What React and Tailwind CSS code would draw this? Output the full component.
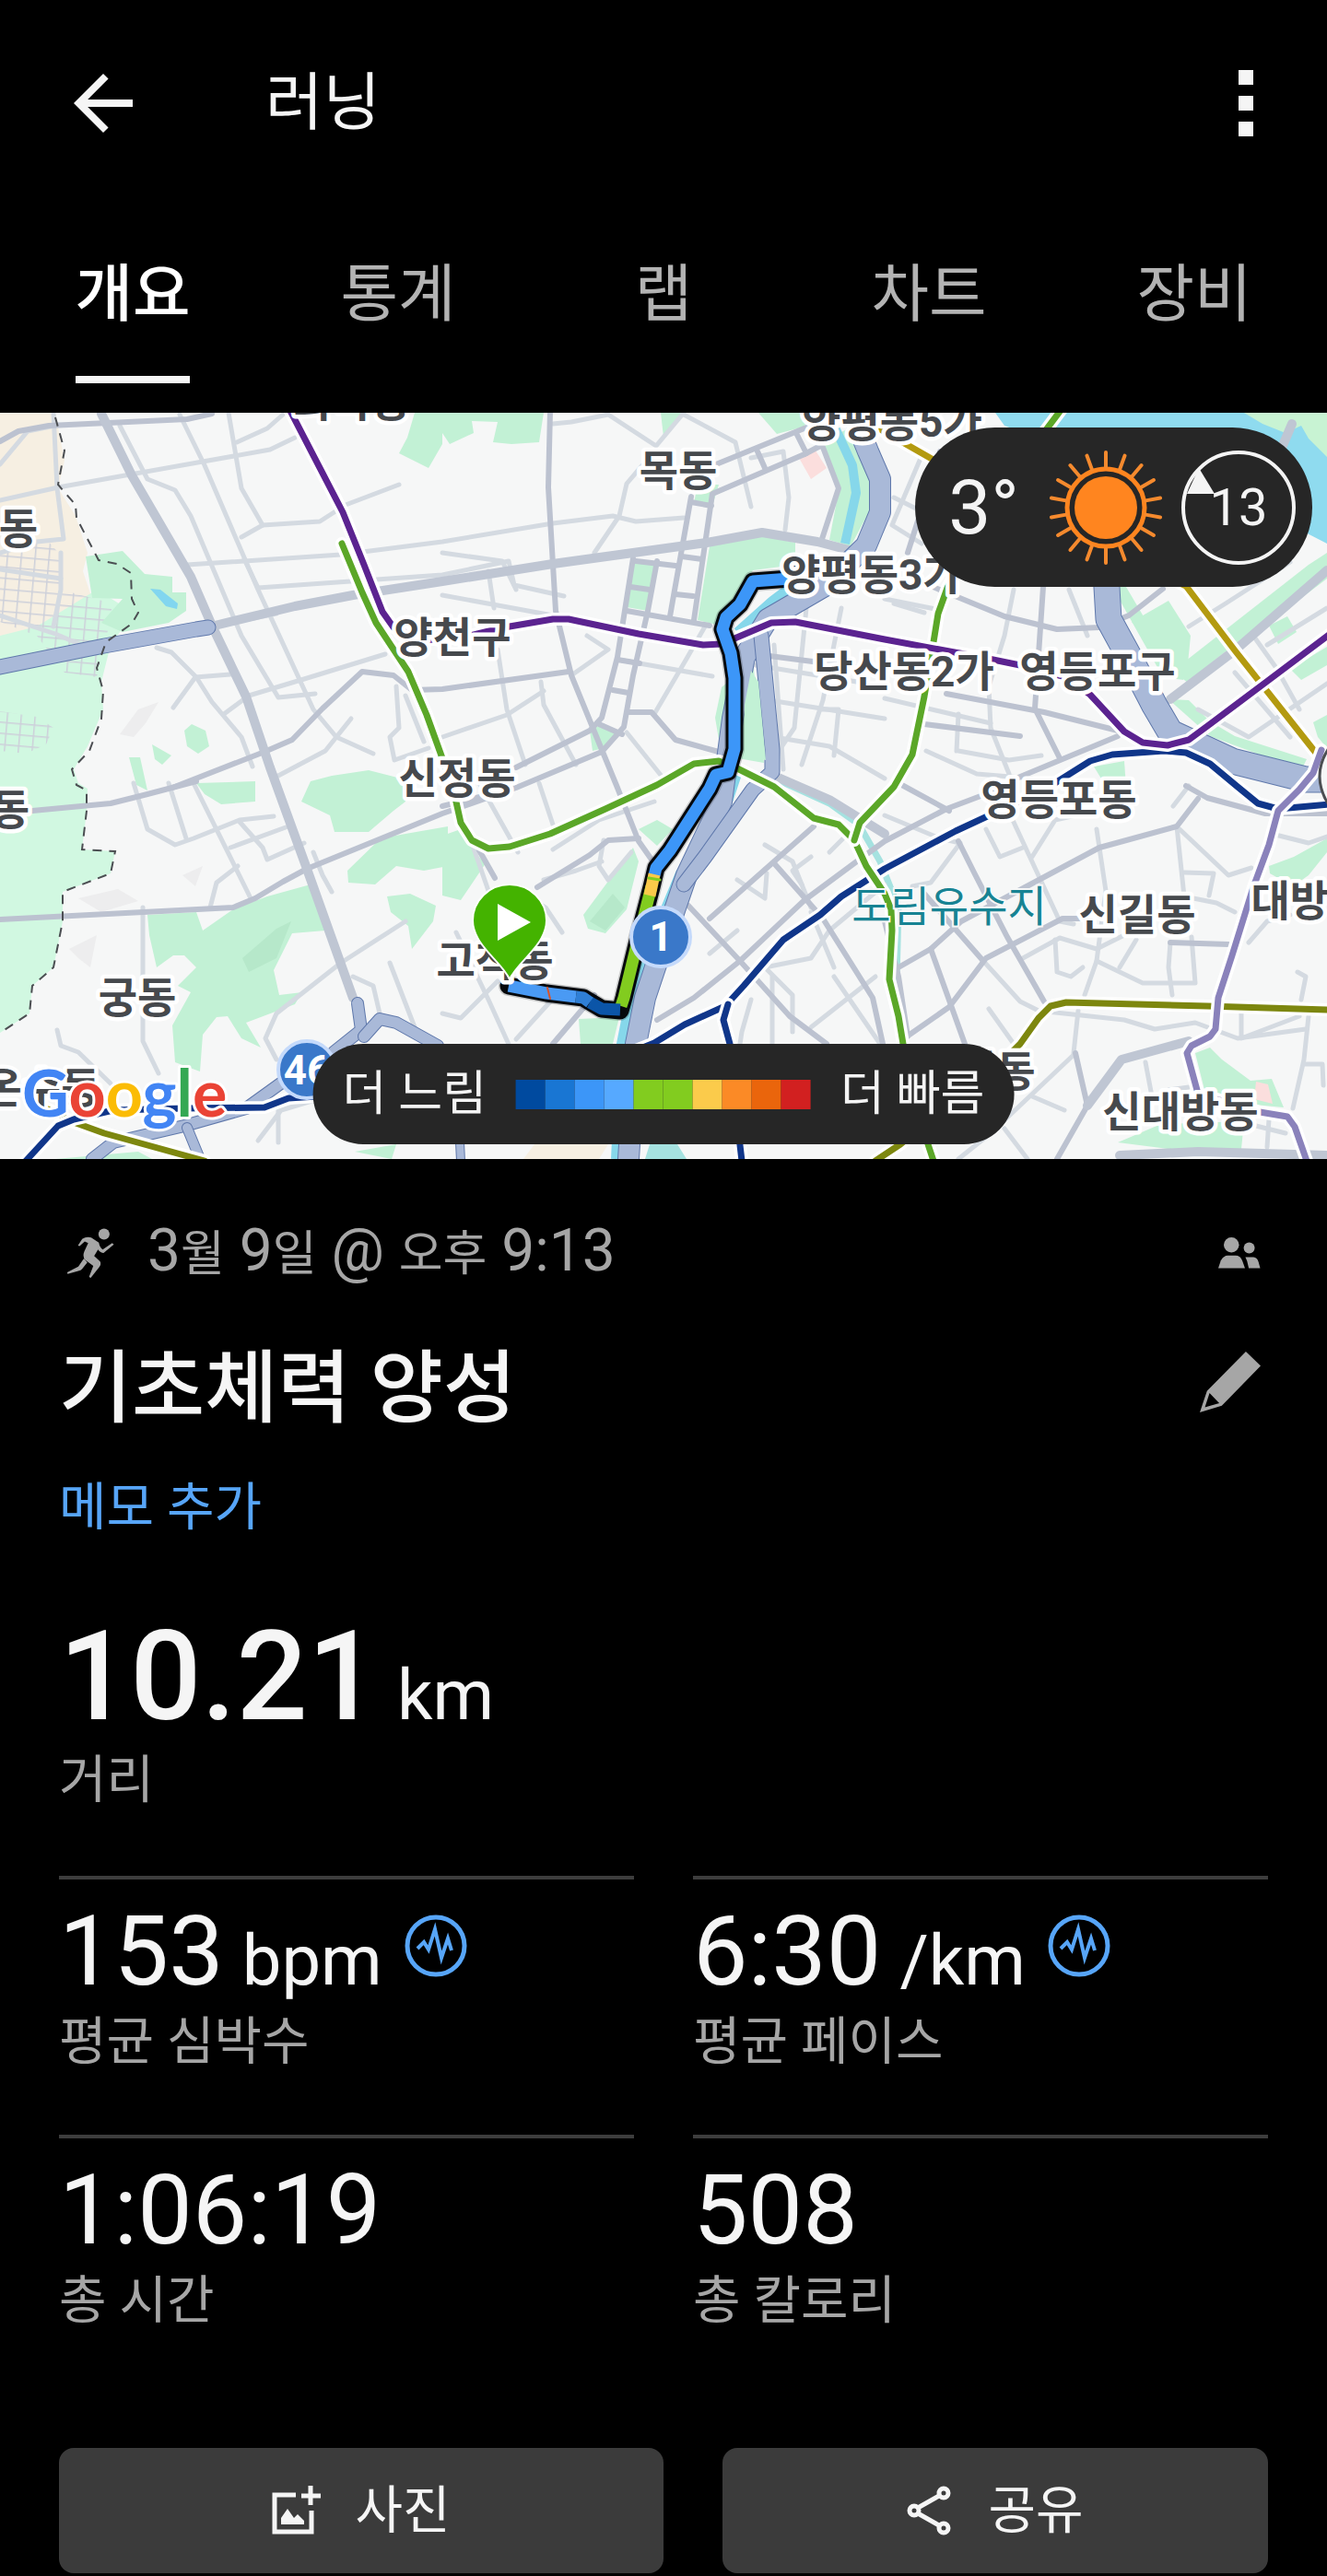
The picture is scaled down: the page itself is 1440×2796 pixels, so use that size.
import { useState } from "react";

const tabs = ["개요", "통계", "랩", "차트", "장비"];

const paceColors = [
  "bg-[#004a9f]",
  "bg-[#1976d3]",
  "bg-[#3c96f8]",
  "bg-[#56a9ff]",
  "bg-[#82cc1f]",
  "bg-[#82cc1f]",
  "bg-[#fbcb4b]",
  "bg-[#fb8a26]",
  "bg-[#ea650c]",
  "bg-[#d22020]",
];

const stats = [
  { value: "153", unit: "bpm", label: "평균 심박수", graph: true },
  { value: "6:30", unit: "/km", label: "평균 페이스", graph: true },
  { value: "1:06:19", label: "총 시간" },
  { value: "508", label: "총 칼로리" },
];

// Map geometry. Units are the same as the map svg's viewBox.
const parks = [
  "93,604 133,598 157,623 187,626 187,643 202,643 202,663 183,676 133,686 110,676 133,650 100,649",
  "450,448 480,448 480,482 465,508 433,492 442,475",
  "480,448 590,448 585,480 555,482 535,480 540,458 512,457 514,470 488,482 480,470",
  "200,793 208,786 223,793 227,810 215,818 203,810",
  "140,822 152,822 160,858 148,852",
  "165,808 186,820 176,830 168,824",
  "327,870 337,848 360,842 400,836 447,848 440,870 427,880 400,903 363,903 358,885",
  "377,945 413,910 440,905 486,897 486,940 460,945 430,940 407,960 378,958",
  "420,973 445,970 473,983 470,1000 447,1030 443,1005 424,990",
  "213,850 277,848 277,870 240,873 222,862",
  "160,993 213,990 220,1010 253,987 290,973 337,960 353,1010 317,1013 297,1053 303,1080 328,1077 320,1090 267,1110 283,1137 262,1127 247,1103 235,1104 220,1123 217,1163 190,1153 187,1113 207,1077 193,1070 213,1050 200,1037 188,1037 170,1050 162,1015",
  "480,907 500,900 515,925 527,937 500,977 480,972",
  "693,900 713,890 730,900 713,918",
  "633,993 687,920 693,935 680,987 657,1013 638,1008",
  "770,593 823,581 863,589 863,613 817,619 777,678 757,673",
  "893,479 923,464 943,513 943,556 923,593 900,586 910,533",
  "687,609 710,613 703,663 680,659",
  "753,546 757,526 780,526 773,549",
  "823,448 877,448 873,463 843,471",
  "717,448 740,448 720,474",
  "783,746 817,718 829,828 783,820 776,779",
  "640,793 655,785 672,796 655,812 643,815",
  "1207,637 1222,637 1262,705 1290,718 1284,738 1262,735",
  "1228,675 1268,652 1292,690 1288,730 1262,715",
  "1273,728 1420,613 1440,600 1440,628 1290,742",
  "1377,679 1397,669 1407,686 1387,699",
  "1400,726 1440,702 1440,722 1412,738",
  "1268,759 1290,760 1313,783 1340,799 1418,824 1412,836 1313,799",
  "1425,784 1440,776 1440,812 1430,800",
  "1187,832 1220,826 1222,855 1198,850",
  "1377,940 1404,930 1440,910 1440,925 1420,950 1403,962 1378,948",
  "1297,1143 1313,1137 1326,1150 1357,1173 1380,1171 1393,1202 1350,1198 1308,1187",
  "1213,1240 1260,1220 1350,1217 1347,1247 1300,1252 1260,1246",
  "628,1106 672,1104 665,1133 630,1133",
  "60,1258 150,1250 165,1258",
  "385,1250 430,1242 425,1258",
];

const minorRoads = [
  "0,543 63,529 147,514 293,488 320,475",
  "130,462 160,520 190,532 207,560 262,690 302,757 342,753",
  "195,450 222,505 280,640 340,770 365,800 405,818",
  "248,448 262,530 285,570 262,583",
  "285,570 347,566 375,548 433,526",
  "257,480 290,465 307,450",
  "203,613 370,602 480,588 600,568 665,560 690,566 742,562",
  "265,607 280,638 480,624 552,609 558,635 612,647",
  "233,679 260,674 300,666",
  "243,775 270,755 330,737 418,710",
  "170,703 186,708 213,735 230,762 262,800 274,832",
  "188,768 212,735 250,732",
  "300,843 353,815 381,780",
  "430,745 433,790 423,800 428,825 465,812",
  "440,755 460,805",
  "0,504 30,468 60,462",
  "58,448 62,530 69,585 40,588 0,600",
  "66,600 66,640 58,680",
  "0,618 66,628",
  "0,668 60,688 100,705",
  "145,850 160,900 190,917 210,910 260,890 297,886",
  "183,850 202,910",
  "210,850 272,975",
  "250,920 310,898",
  "260,892 285,920 290,933 330,915",
  "228,985 235,958 258,940",
  "155,985 155,1130 172,1165",
  "62,1118 66,1135 85,1142 120,1176",
  "340,925 350,950 360,968",
  "440,1000 370,1045 300,1100 288,1127 300,1150",
  "423,1045 450,1115",
  "383,1060 405,1070 412,1100",
  "280,1238 305,1205 345,1193",
  "302,1205 302,1240",
  "600,460 620,458 660,450 712,484 742,448",
  "742,450 798,480 815,550",
  "697,505 680,525 672,560 645,600",
  "815,497 850,490 856,540 852,575",
  "480,600 545,609 560,640",
  "530,620 536,660",
  "480,646 600,668",
  "540,705 550,770 570,830",
  "480,800 550,776 590,750",
  "587,740 590,765 625,830",
  "620,733 660,705 637,690",
  "671,716 773,734",
  "765,680 745,715 710,775",
  "680,795 720,845",
  "493,860 545,1010",
  "520,850 562,925",
  "585,850 600,895",
  "600,922 650,890 710,870",
  "560,965 592,985 610,1012",
  "655,912 650,940 660,955 685,925",
  "590,955 625,945 653,935",
  "495,1012 530,1085 555,1140",
  "480,1100 500,1105 540,1065",
  "560,1128 600,1084",
  "840,700 850,835",
  "875,660 862,790 835,830",
  "913,660 893,760 870,830",
  "820,722 960,745",
  "835,760 960,780",
  "840,800 900,810 960,845",
  "890,770 910,770 905,820",
  "1003,665 970,655",
  "1100,640 1090,690 1073,745 1075,790 1095,840",
  "960,650 1020,662",
  "1040,815 1095,825 1130,820",
  "960,758 1075,785",
  "1040,775 1038,815",
  "1005,815 1060,840 1120,845",
  "1160,640 1180,690",
  "1000,495 968,570 1000,590",
  "970,540 1010,560",
  "1290,680 1330,655 1400,610",
  "1280,750 1330,710",
  "1340,730 1400,800",
  "1300,770 1355,800 1440,742",
  "1375,700 1440,660",
  "1360,690 1385,725 1410,770",
  "830,917 860,935 880,985",
  "880,930 860,945 870,960",
  "800,955 830,975 832,948",
  "770,1035 800,1010",
  "900,925 920,905",
  "815,1085 805,1120 803,1133",
  "838,1060 838,1133",
  "860,1120 860,1080 830,1050 880,1040 900,1010 960,960",
  "880,990 905,1050",
  "880,1115 950,1060",
  "905,1060 955,1133",
  "1070,900 1085,930 1110,920",
  "1098,888 1150,1000 1165,1003",
  "1120,930 1145,890 1190,880",
  "960,885 1020,910 1042,915 1010,958 990,962",
  "1190,900 1200,967 1190,1043 1177,1080",
  "1190,1043 1240,1067 1297,1067 1293,1017",
  "1215,1050 1233,1020",
  "1270,1023 1268,1050 1272,1080",
  "1277,897 1285,973 1320,980 1340,990",
  "1280,900 1333,950 1358,942",
  "1285,947 1317,948 1312,972",
  "1355,1023 1375,1000 1400,993",
  "1290,853 1273,875",
  "1110,1040 1150,1018 1190,1030 1230,1010",
  "1145,1020 1147,1055 1162,1060 1175,1050",
  "1067,1043 1107,1087 1127,1097 1220,1107 1253,1117 1297,1110 1343,1127 1417,1117",
  "1347,1100 1347,1127 1410,1103",
  "1073,1095 1100,1133",
  "1170,1097 1165,1143",
  "1165,1145 1075,1230 1040,1258",
  "1120,1190 1155,1205",
  "1090,1225 1115,1258",
  "1243,1153 1250,1190",
  "1290,1180 1268,1183 1266,1195",
  "1420,1103 1415,1150 1403,1203",
  "1408,1055 1417,1060 1412,1085",
  "1415,1155 1435,1155 1436,1178",
  "1377,1215 1375,1245",
  "1355,1220 1395,1230",
  "1380,905 1420,915 1440,908",
];

const majorRoads = [
  "0,479 20,468 53,462 203,455 230,449",
  "187,855 287,816 317,803 350,769 393,729 427,733 447,749 480,748 617,729",
  "35,880 120,872 160,862 213,848",
  "0,998 253,985 277,975 307,957 333,943 480,883 560,855 653,816 677,789 687,733 703,663 713,609",
  "597,446 595,529 603,663 620,733 647,799 670,855 693,913 712,940",
  "687,606 670,713 653,779 640,793 560,833",
  "690,609 733,614",
  "727,669 750,539",
  "753,673 773,536 873,493",
  "680,663 770,679",
  "750,545 772,549",
  "740,604 762,607",
  "733,645 752,647",
  "684,637 705,640",
  "670,716 694,720",
  "665,749 682,752",
  "650,786 675,797",
  "777,504 880,462",
  "822,490 830,508",
  "865,472 875,492",
  "873,493 892,483 910,530 892,585",
  "683,773 707,773 733,803 780,816",
  "1003,633 1090,669 1147,683 1193,681 1225,668 1262,639",
  "1132,637 1123,769 1150,823",
  "1027,753 1133,773 1213,793",
  "1003,786 1107,799",
  "1100,846 1213,799",
  "835,712 960,728",
  "713,1107 753,1083 803,1043 873,977 927,937 960,913 1027,878 1080,858",
  "747,983 803,1043 857,1103 897,1133",
  "840,937 893,997 947,1083 958,1133",
  "770,997 883,897",
  "583,963 640,928 660,912 693,910",
  "520,923 537,953",
  "600,1133 645,1080",
  "480,875 540,860",
  "975,1050 1010,1030 1043,1000 1193,920 1215,914 1277,897 1300,867",
  "987,1123 1030,1093 1070,1040 1153,997 1175,997",
  "1040,913 1057,947 1093,1017 1133,1087",
  "1010,1030 1047,1133",
  "1003,970 1067,1043",
  "975,850 1030,880",
  "1167,1143 1180,1200 1147,1258",
  "1270,1023 1333,1025",
  "1287,853 1310,866 1373,883 1440,883",
  "960,1000 975,1060 985,1125",
  "1020,490 985,600",
];

const wideRoads = [
  "110,449 143,516 207,626 230,679 267,756 293,833 333,943 383,1083",
  "233,679 320,658 383,646 480,631 600,612 767,589 827,578 887,588 925,598",
  "1180,1200 1217,1150 1290,1130",
  "840,842 900,868 960,905",
  "1270,759 1340,706 1440,619",
  "1385,500 1402,460",
  "1215,1254 1300,1250 1440,1254",
];

const highways = [
  { w: 15, d: "0,724 113,701 213,683 226,681" },
  { w: 22, d: "925,448 942,490 955,520 955,556 940,592 895,636 833,672 808,713 795,780 783,870 745,950 722,1017 700,1083 690,1133 682,1258" },
  { w: 15, d: "826,690 838,813 838,838 817,857 765,930 742,960" },
  { w: 27, d: "1200,620 1203,672 1227,716 1253,766 1270,795 1337,826 1417,846 1445,846" },
  { w: 12, d: "388,1089 392,1118 362,1142" },
  { w: 12, d: "395,1125 412,1106 430,1110 475,1135" },
  { w: 12, d: "100,1258 123,1240 200,1222 267,1203 310,1172" },
  { w: 10, d: "203,1224 217,1258" },
  { w: 8, d: "499,1240 500,1260" },
];

const greenLine =
  "371,590 393,643 408,676 443,729 463,776 480,823 492,857 500,893 512,912 530,921 553,919 597,905 657,878 713,852 753,829 780,826 800,834 840,854 883,888 910,895 927,912 940,940 960,970 967,987 968,1010 965,1063 975,1103 980,1133 1007,1242 1013,1260";

const subwayLines = [
  { color: "#b39a10", d: "945,460 983,482 1120,560 1287,636 1340,706 1427,816 1442,830" },
  { color: "#7d870f", d: "50,1203 77,1217 113,1230 222,1260" },
  { color: "#7d870f", d: "950,1260 977,1242 1040,1190 1087,1153 1107,1133 1127,1105 1140,1092 1157,1088 1310,1092 1442,1096" },
  { color: "#10368a", d: "28,1260 63,1222 80,1215 123,1205 200,1203 287,1202 313,1192 500,1180 640,1160 710,1132 743,1112 787,1092 807,1070 850,1020 890,993 913,973 960,943 1037,902 1080,882 1140,853 1183,826 1207,819 1263,815 1287,817 1313,829 1343,854 1365,872 1387,878 1442,873" },
  { color: "#10368a", d: "790,1090 785,1107 792,1133 803,1243 805,1260" },
  { color: "#5ba728", d: greenLine },
  { color: "#5ba728", d: "1152,444 1080,540 1028,638 1018,666 1012,703 1003,756 990,819 970,854 933,893 927,912" },
  { color: "#5b2390", d: "314,444 372,556 395,613 415,664 427,681 460,695 510,690 547,681 600,672 617,672 693,688 763,700 783,699 837,676 863,675 960,694 1063,713 1107,722 1157,735 1183,754 1220,794 1240,806 1267,809 1290,803 1313,786 1373,741 1442,689" },
  { color: "#8a82bb", d: "1434,814 1425,839 1410,857 1387,880 1377,917 1360,963 1337,1037 1322,1083 1319,1117 1313,1125 1293,1135 1288,1143 1300,1187 1367,1207 1397,1212 1405,1223 1418,1260" },
];

const route =
  "876,618 857,628 817,631 803,656 788,670 784,683 793,709 797,736 797,813 790,838 777,841 770,856 727,923 712,942 707,963 693,1017 677,1083 673,1097 653,1095 633,1083 593,1078 552,1070";

const routeSegments = [
  { color: "#3c96f8", d: "876,618 857,628 817,631 803,656 788,670 784,683 793,709 797,736 797,813 790,838 777,841 770,856 727,923 712,942 710,950" },
  { color: "#82cc1f", d: "707,962 693,1017 677,1083 674,1092" },
  { color: "#fbc94a", d: "710,949 705,972" },
  { color: "#0b55a8", d: "673,1096 653,1095 640,1088" },
  { color: "#2f7fd6", d: "640,1088 633,1083 625,1082" },
  { color: "#4a9af4", d: "625,1082 593,1078 552,1070" },
];

const places = [
  { name: "화곡동", x: 382, y: 452 },
  { name: "동", x: 20, y: 590 },
  { name: "목동", x: 736, y: 527 },
  { name: "양평동5가", x: 968, y: 474 },
  { name: "양평동3가", x: 946, y: 640 },
  { name: "양천구", x: 491, y: 708 },
  { name: "당산동2가", x: 981, y: 745 },
  { name: "영등포구", x: 1191, y: 745 },
  { name: "신정동", x: 496, y: 861 },
  { name: "영등포동", x: 1149, y: 884 },
  { name: "동", x: 11, y: 895 },
  { name: "신길동", x: 1234, y: 1009 },
  { name: "대방동", x: 1421, y: 994 },
  { name: "고척동", x: 537, y: 1059 },
  { name: "궁동", x: 149, y: 1099 },
  { name: "신대방동", x: 1281, y: 1223 },
  { name: "대림동", x: 1060, y: 1179 },
  { name: "온수동", x: 45, y: 1197 },
];

function Lines({ list, color, width }) {
  return (
    <g fill="none" stroke={color} strokeWidth={width} strokeLinecap="round" strokeLinejoin="round">
      {list.map((points) => (
        <polyline key={points} points={points} />
      ))}
    </g>
  );
}

function RouteMap() {
  return (
    <svg
      viewBox="0 448 1440 810"
      className="block w-full h-auto"
      role="img"
      aria-label="러닝 경로 지도"
    >
      <defs>
        <pattern id="blocks" width="15" height="12" patternUnits="userSpaceOnUse" patternTransform="rotate(5)">
          <path d="M0 0H15M0 0V12" stroke="#cdd0da" strokeWidth="3" fill="none" />
        </pattern>
      </defs>
      <rect x="0" y="448" width="1440" height="810" fill="#f6f7f7" />

      <polygon fill="#f6efe2" points="0,448 60,448 70,500 63,530 82,560 95,600 90,620 100,650 40,690 0,700" />
      <polygon
        fill="#d1f8e1"
        points="0,690 40,680 105,640 145,665 120,700 110,740 112,770 95,810 80,835 85,850 95,856 94,880 89,922 125,924 120,948 68,968 68,1000 58,1050 35,1070 32,1100 0,1121"
      />
      <polygon fill="url(#blocks)" points="0,595 50,585 68,605 66,640 122,655 118,680 105,735 70,730 40,690 0,675" />
      <polygon fill="url(#blocks)" points="0,772 40,778 58,790 50,808 28,818 0,815" />
      <g fill="#ededee">
        <polygon points="130,797 150,770 172,762 158,785 145,800" />
        <polygon points="75,1030 105,1015 98,1050 85,1040" />
        <polygon points="85,975 128,965 150,978 110,990" />
        <polygon points="198,950 220,940 212,962" />
      </g>
      {parks.map((points) => (
        <polygon key={points} points={points} fill="#c2f1d5" />
      ))}
      <g fill="#b6e8ca">
        <polygon points="263,1040 300,1008 316,1000 300,1040 270,1055" />
        <polygon points="640,1000 665,970 678,985 657,1010" />
      </g>
      <g fill="#fbdedd">
        <polygon points="867,497 885,489 897,508 880,520" />
        <polygon points="1363,1174 1376,1177 1381,1198 1361,1193" />
      </g>

      {/* river and streams */}
      <polygon fill="#8fdbef" points="1080,448 1440,448 1440,590 1405,572 1300,540 1090,462" />
      <polygon fill="#c8f3d3" points="1350,448 1440,448 1440,496 1420,476 1412,462 1395,470 1370,460" />
      <polygon fill="#82d6ef" points="163,639 174,640 193,655 192,661 180,658" />
      <g fill="none" stroke="#86d7ea" strokeWidth="10" strokeLinejoin="round">
        <polyline points="907,466 925,505 929,535 917,590" />
        <polyline points="862,634 838,652 800,686" />
        <polyline points="800,840 785,885 738,948 712,1010 684,1083 674,1133 668,1258" />
      </g>
      <polyline points="843,846 900,872 932,895 955,935 975,985 972,1100" fill="none" stroke="#a5e2e0" strokeWidth="7" />
      <polygon fill="#f6efe2" points="580,1242 660,1242 650,1258 568,1258" />
      <polygon fill="#a5e2e0" points="705,1242 735,1242 745,1258 700,1258" />

      <Lines list={minorRoads} color="#d4dae1" width={5} />
      <Lines list={majorRoads} color="#bcc2d0" width={6} />
      <Lines list={wideRoads} color="#bfc6d3" width={10} />
      {highways.map((road) => (
        <g key={road.d} fill="none" strokeLinecap="round" strokeLinejoin="round">
          <polyline points={road.d} stroke="#5f78ab" strokeWidth={road.w + 2} />
          <polyline points={road.d} stroke="#a9b9d8" strokeWidth={road.w} />
        </g>
      ))}
      <polygon points="815,728 823,740 831,825 806,820 808,765" fill="#c2f1d5" />

      <polyline
        points="60,453 70,489 63,526 82,548 83,562 107,608 127,612 142,622 143,650 150,665 143,677 115,697 105,725 112,750 110,780 97,815 78,835 83,852 94,858 94,880 89,922 125,924 120,948 68,968 68,1000 58,1050 35,1070 32,1100 0,1121"
        fill="none"
        stroke="#4b4e52"
        strokeWidth="2"
        strokeDasharray="10 8"
      />

      {subwayLines.map((line) => (
        <g key={line.d} fill="none" strokeLinejoin="round" strokeLinecap="round">
          <polyline points={line.d} stroke="#ffffff" strokeWidth="14" />
          <polyline points={line.d} stroke={line.color} strokeWidth="7" />
        </g>
      ))}
      <path d="M1442 812Q1422 842 1442 874" fill="#f6f7f7" stroke="#4b4e52" strokeWidth="3" />

      {/* recorded track, coloured by pace */}
      <g fill="none" strokeLinejoin="round" strokeLinecap="round">
        <polyline points={route} stroke="#00000030" strokeWidth="22" />
        <polyline points={route} stroke="#05080c" strokeWidth="19" />
        {routeSegments.map((seg) => (
          <polyline key={seg.d} points={seg.d} stroke={seg.color} strokeWidth="13" strokeLinecap="butt" />
        ))}
        <path d="M594 1072L597 1084" stroke="#d9542b" strokeWidth="2" />
        <path d="M704 953L716 955" stroke="#82cc1f" strokeWidth="3" />
      </g>

      <g
        textAnchor="middle"
        fontSize="46"
        fontWeight="700"
        fill="#46494d"
        stroke="#ffffff"
        strokeWidth="9"
        strokeLinejoin="round"
        paintOrder="stroke"
      >
        {places.map((place) => (
          <text key={`${place.name}${place.x}`} x={place.x} y={place.y}>
            {place.name}
          </text>
        ))}
      </g>
      <text x="1030" y="1000" textAnchor="middle" fontSize="46" fill="#178393" stroke="#f6f7f7" strokeWidth="4" paintOrder="stroke">
        도림유수지
      </text>

      <g textAnchor="middle" fontSize="44" fontWeight="700" fill="#ffffff">
        <circle cx="717" cy="1017" r="32" fill="#3a78c9" stroke="#c5dafb" strokeWidth="4" />
        <text x="717" y="1032">1</text>
        <circle cx="333" cy="1161" r="31" fill="#3a78c9" stroke="#c5dafb" strokeWidth="4" />
        <text x="333" y="1177">46</text>
      </g>

      <path
        d="M553 1063C545 1044 513 1026 513 999A40 39 0 0 1 593 999C593 1026 561 1044 553 1063Z"
        fill="#44b300"
        stroke="#ffffff"
        strokeWidth="2"
      />
      <path d="M540 981L576 1001L540 1021Z" fill="#ffffff" />
    </svg>
  );
}

function SunIcon() {
  const rays = Array.from({ length: 18 }, (_, i) => i * 20);
  return (
    <svg viewBox="-62 -62 124 124" className="size-[124px]" aria-hidden="true">
      <circle r="34" fill="#ff851f" />
      <circle r="42" fill="none" stroke="#ff851f" strokeWidth="5" />
      {rays.map((angle) => (
        <path key={angle} d="M0 -44V-60" stroke="#f58a2e" strokeWidth="4" strokeLinecap="round" transform={`rotate(${angle})`} />
      ))}
    </svg>
  );
}

function Weather() {
  return (
    <div className="absolute top-4 right-4 flex h-[173px] items-center rounded-full bg-[#262626] pl-9 pr-[18px] text-[#f4f4f4]">
      <span className="text-[82px] leading-none">3°</span>
      <span className="ml-8">
        <SunIcon />
      </span>
      <span className="relative ml-5 flex size-[124px] items-center justify-center text-[56px] leading-none">
        <svg viewBox="0 0 124 124" className="absolute inset-0" aria-hidden="true">
          <circle cx="62" cy="62" r="60" fill="none" stroke="#f4f4f4" strokeWidth="4" />
          <path d="M6 47H36L19 19Z" fill="#f4f4f4" />
        </svg>
        <span className="relative">13</span>
      </span>
    </div>
  );
}

function PaceLegend() {
  return (
    <div className="absolute bottom-4 left-1/2 flex h-[109px] -translate-x-1/2 items-center gap-8 rounded-full bg-[#262626] px-8 text-[52px] leading-none whitespace-nowrap text-[#f4f4f4]">
      <span>더 느림</span>
      <div className="flex">
        {paceColors.map((color, i) => (
          <span key={i} className={`size-8 ${color}`} />
        ))}
      </div>
      <span>더 빠름</span>
    </div>
  );
}

function GoogleMark() {
  return (
    <svg viewBox="0 0 230 90" className="absolute bottom-4 left-6 h-[90px] w-[230px]" aria-label="Google">
      <text x="0" y="60" fontFamily="Lato, sans-serif" fontSize="70" fontWeight="700" stroke="#ffffff" strokeWidth="6" strokeLinejoin="round" paintOrder="stroke">
        <tspan fill="#4285f4">G</tspan>
        <tspan fill="#ea4335">o</tspan>
        <tspan fill="#fbbc05">o</tspan>
        <tspan fill="#4285f4">g</tspan>
        <tspan fill="#34a853">l</tspan>
        <tspan fill="#ea4335">e</tspan>
      </text>
    </svg>
  );
}

function GraphIcon() {
  return (
    <svg viewBox="0 0 68 68" className="size-[68px]" fill="none" stroke="#57a5f8" aria-hidden="true">
      <circle cx="34" cy="34" r="31" strokeWidth="5" />
      <path d="M14 37L21 30L26 38L33 16L40 47L47 26L51 39" strokeWidth="4" />
    </svg>
  );
}

function Stat({ value, unit, label, graph }) {
  return (
    <div className="border-t-4 border-[#3d3d3d] pt-[26px]">
      <div className="flex h-[104px]">
        <p className="text-[106px] leading-[104px]">
          {value}
          {unit && <span className="ml-5 text-[76px] leading-none">{unit}</span>}
        </p>
        {graph && (
          <button type="button" aria-label={`${label} 그래프`} className="ml-6 mt-3 self-start">
            <GraphIcon />
          </button>
        )}
      </div>
      <p className="mt-3.5 text-[56px] leading-[64px] text-[#a6a6a6]">{label}</p>
    </div>
  );
}

export default function App() {
  const [active, setActive] = useState("개요");

  return (
    <div className="min-h-screen bg-black pb-[3px] font-[Roboto,'Noto_Sans_CJK_KR',sans-serif] text-[#f5f5f5]">
      <header className="flex h-56 items-center px-16">
        <button type="button" aria-label="뒤로">
          <svg viewBox="0 0 24 24" className="size-24" fill="currentColor" aria-hidden="true">
            <path d="M20 11H7.8l5.6-5.6L12 4l-8 8 8 8 1.4-1.4L7.8 13H20z" />
          </svg>
        </button>
        <h1 className="ml-32 text-[68px] leading-none">러닝</h1>
        <button type="button" aria-label="더 보기" className="ml-auto flex flex-col gap-3 px-4">
          <span className="size-4 bg-[#f5f5f5]" />
          <span className="size-4 bg-[#f5f5f5]" />
          <span className="size-4 bg-[#f5f5f5]" />
        </button>
      </header>

      <nav role="tablist" className="grid grid-cols-5">
        {tabs.map((tab) => (
          <button
            key={tab}
            type="button"
            role="tab"
            aria-selected={active === tab}
            onClick={() => setActive(tab)}
            className={`flex flex-col items-center pt-12 pb-8 text-[68px] ${
              active === tab ? "font-medium text-white" : "text-[#b3b3b3]"
            }`}
          >
            <span className="leading-[96px]">{tab}</span>
            <span className={`mt-10 h-2 w-31 ${active === tab ? "bg-[#f5f5f5]" : "bg-transparent"}`} />
          </button>
        ))}
      </nav>

      <section className="relative overflow-hidden">
        <RouteMap />
        <GoogleMark />
        <Weather />
        <PaceLegend />
      </section>

      <main className="px-16 pt-[70px]">
        <div className="flex h-16 items-center text-[#a6a6a6]">
          <svg viewBox="156 154 112 120" className="ml-2 h-14 w-13" fill="currentColor" aria-hidden="true">
            <circle cx="244" cy="170" r="13" />
            <path d="M183 197L193 181Q203 175 214 178L232 190Q234 202 241 206L263 191L267 194L243 214Q236 214 230 206L221 221L235 234Q238 240 233 247L213 272L209 270L219 244L200 230Q193 222 198 210L207 191L199 187L187 198Z" />
            <path d="M197 227L205 236L193 251Q190 255 184 256L159 263L158 259L184 246Z" />
          </svg>
          <p className="ml-9 text-[64px] leading-[64px] whitespace-nowrap">
            3<span className="text-[52px]">월</span> 9<span className="text-[52px]">일</span> @{" "}
            <span className="text-[52px]">오후</span> 9:13
          </p>
          <svg viewBox="1310 180 100 74" className="ml-auto mr-2 h-[34px] w-[46px]" fill="currentColor" role="img" aria-label="친구 공개">
            <circle cx="1341" cy="198" r="18" />
            <circle cx="1383" cy="205" r="13" />
            <path d="M1310 253L1316 235Q1323 223 1332 223H1351Q1362 223 1367 236L1373 253Z" />
            <path d="M1374 227H1393Q1402 228 1405 238L1409 253H1382L1378 236Z" />
          </svg>
        </div>

        <div className="mt-15 flex h-24 items-center justify-between">
          <h2 className="pt-4 text-[86px] leading-[96px] font-medium">기초체력 양성</h2>
          <button type="button" aria-label="이름 수정" className="mr-2 text-[#a6a6a6]">
            <svg viewBox="1270 448 144 144" className="size-[66px]" fill="currentColor" fillRule="evenodd" aria-hidden="true">
              <path d="M1379 448L1414 482L1322 576L1270 592L1287 541ZM1293 546L1282 580L1316 570Z" />
            </svg>
          </button>
        </div>

        <a href="#memo" className="mt-14 block w-fit text-[56px] leading-[64px] text-[#57a5f8]">
          메모 추가
        </a>

        <p className="mt-21 text-[136px] leading-[136px] font-medium">
          10.21<span className="ml-5 text-[76px] leading-none font-normal">km</span>
        </p>
        <p className="mt-3 text-[56px] leading-[64px] text-[#a6a6a6]">거리</p>

        <div className="mt-18 grid grid-cols-2 gap-x-16 gap-y-[69px]">
          {stats.map((stat) => (
            <Stat key={stat.label} {...stat} />
          ))}
        </div>

        <div className="mt-32 grid grid-cols-[656fr_592fr] gap-16 text-[56px]">
          <button type="button" className="flex h-34 items-center justify-center gap-9 rounded-2xl bg-[#3b3b3b]">
            <svg viewBox="0 0 54 54" className="size-[54px]" fill="none" stroke="currentColor" strokeWidth="5" aria-hidden="true">
              <path d="M26 10H3V50H43V27" />
              <path d="M42 0V21M32 11H53" />
              <path d="M10 42V35L17 25L24 35L28 31L35 38V42Z" fill="currentColor" stroke="none" />
            </svg>
            사진
          </button>
          <button type="button" className="flex h-34 items-center justify-center gap-10 rounded-2xl bg-[#3b3b3b]">
            <svg viewBox="0 0 48 54" className="h-[54px] w-12" fill="none" stroke="currentColor" strokeWidth="5" aria-hidden="true">
              <circle cx="8" cy="27" r="5" />
              <circle cx="40" cy="8" r="5" />
              <circle cx="40" cy="46" r="5" />
              <path d="M35 11L12 24M35 43L12 30" />
            </svg>
            공유
          </button>
        </div>
      </main>
    </div>
  );
}
